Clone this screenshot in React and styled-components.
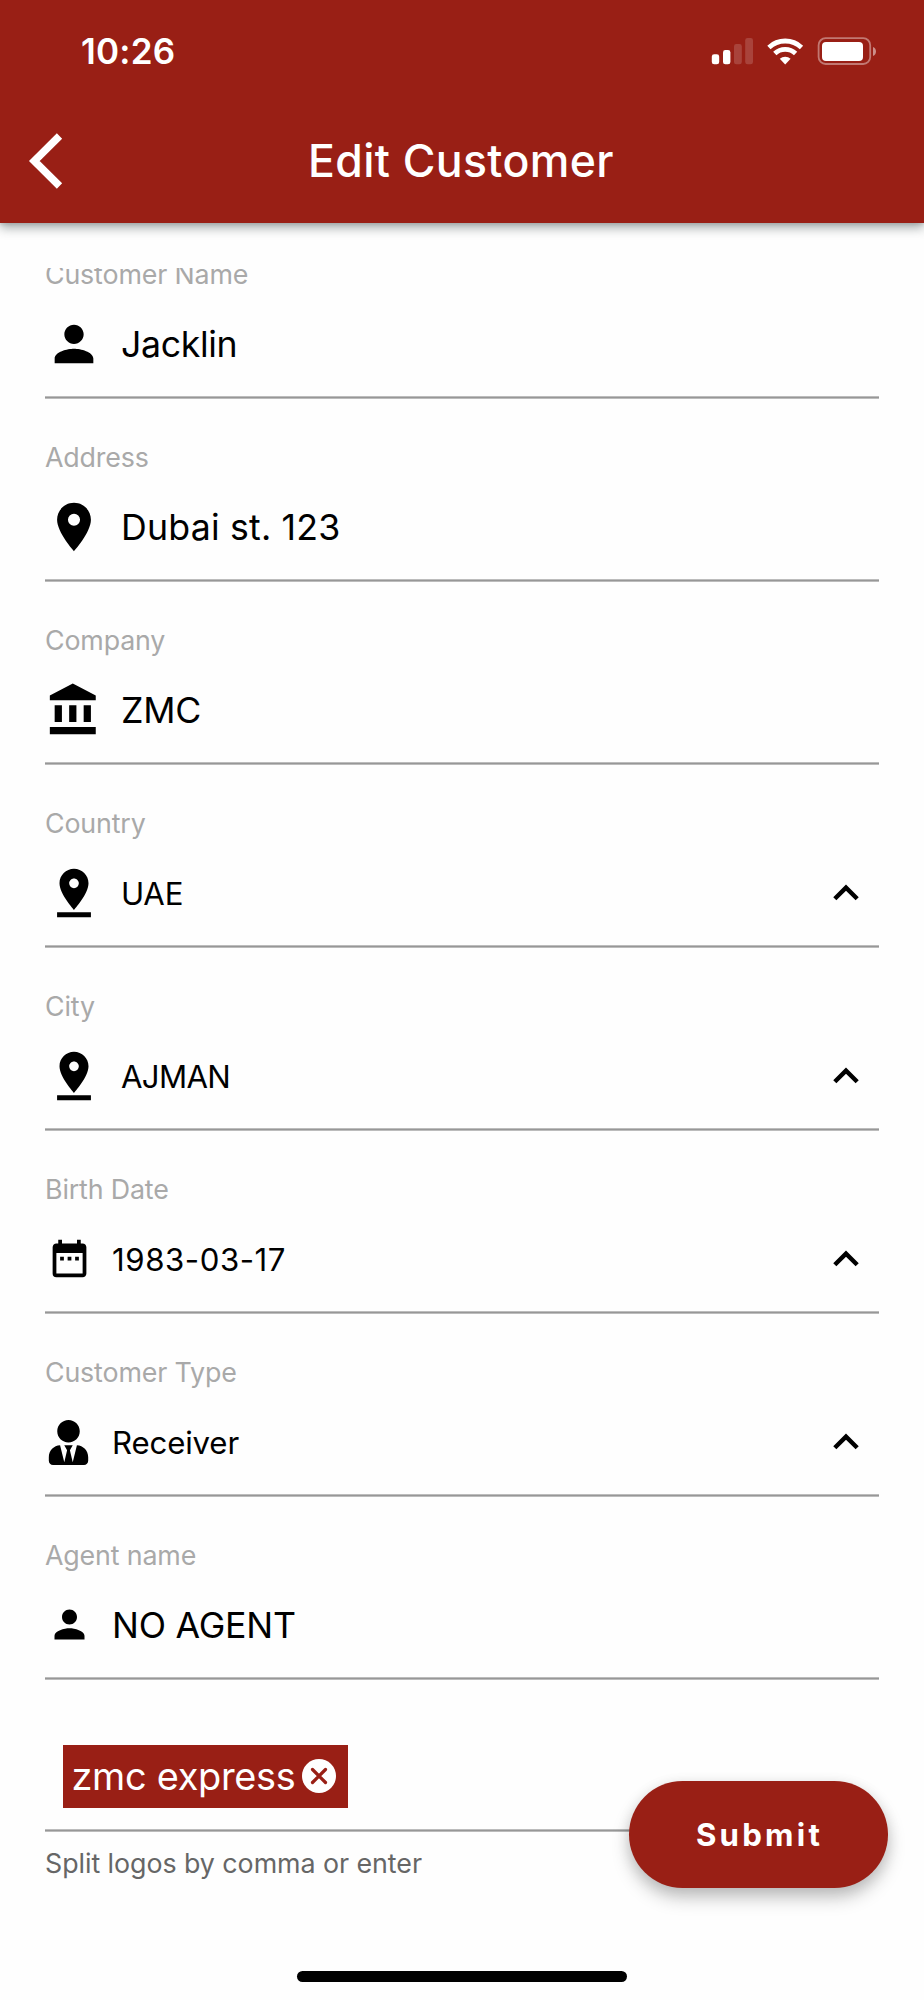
import React from "react";
import styled, { createGlobalStyle } from "styled-components";
import { MdDateRange, MdLocationOn, MdPerson, MdPinDrop } from "react-icons/md";
import { FaUserTie } from "react-icons/fa";

const brand = "#991f15";

const GlobalStyle = createGlobalStyle`
  * {
    box-sizing: border-box;
  }
  body {
    margin: 0;
    background: #fefefe;
    font-family: Inter, "Liberation Sans", sans-serif;
  }
`;

const Screen = styled.div`
  position: relative;
  display: flex;
  flex-direction: column;
  width: 924px;
  height: 2000px;
  overflow: hidden;
  background: #fefefe;
`;

const Header = styled.header`
  flex: none;
  height: 223px;
  color: #fff;
  background: ${brand};
  box-shadow: 0 5px 10px rgba(40, 56, 54, 0.4), 0 2px 3px rgba(40, 56, 54, 0.12);
`;

const StatusBar = styled.div`
  display: flex;
  align-items: center;
  justify-content: space-between;
  height: 101px;
  padding: 0 48px 0 81px;
`;

const Time = styled.span`
  font-size: 35px;
  font-weight: 600;
  line-height: 40px;
  letter-spacing: 0.2px;
`;

const NavBar = styled.div`
  display: grid;
  grid-template-columns: 80px 1fr 82px;
  align-items: center;
  height: 120px;
`;

const BackButton = styled.button`
  display: flex;
  padding: 0 0 0 28px;
  border: 0;
  background: none;
`;

const Title = styled.h1`
  margin: 0;
  text-align: center;
  font-size: 44.6px;
  font-weight: 500;
  line-height: 54px;
  letter-spacing: 0.38px;
`;

const Form = styled.main`
  flex: 1;
  margin-top: 45px;
  padding: 0 45px;
  overflow: hidden;
`;

// the list is scrolled a little, the first label slides under the top edge
const Fields = styled.div`
  margin-top: -52px;
`;

const Label = styled.label`
  display: block;
  padding-top: 42px;
  height: 74px;
  font-size: 26.8px;
  line-height: 32px;
  letter-spacing: -0.15px;
  color: #a9a9a9;
`;

const Row = styled.div`
  display: flex;
  align-items: center;
  height: 106px;
  padding-top: 1px;
`;

const IconBox = styled.span`
  display: flex;
  flex: none;
  justify-content: center;
  width: ${(props) => (props.$wide ? "58px" : "48px")};
  margin-right: ${(props) => (props.$wide ? "18px" : "19px")};
`;

const Value = styled.span`
  flex: 1;
  padding-top: ${(props) => (props.$small ? "2px" : "0")};
  font-size: ${(props) => (props.$small ? "31.2px" : "35.7px")};
  line-height: 44px;
  letter-spacing: ${(props) => props.$spacing}px;
  color: #000;
`;

const Divider = styled.div`
  height: 3px;
  border: solid #bcbcbc;
  border-width: 1px 0;
  background: #979797;
`;

const TagRow = styled.div`
  display: flex;
  height: 149px;
  padding: 65px 0 0 17.5px;
`;

const Tag = styled.span`
  display: flex;
  align-items: center;
  gap: 7px;
  width: 285.5px;
  height: 63px;
  padding: 0 0 1px 9px;
  font-size: 37.9px;
  letter-spacing: -0.3px;
  white-space: nowrap;
  color: #fff;
  background: ${brand};
`;

const Hint = styled.p`
  margin: 14px 0 0;
  font-size: 26.8px;
  line-height: 34px;
  letter-spacing: -0.05px;
  color: #666;
`;

// floats over the end of the form
const SubmitButton = styled.button`
  position: absolute;
  right: 36px;
  bottom: 112px;
  width: 259px;
  height: 107px;
  padding: 0 0 0 2px;
  border: 0;
  border-radius: 54px;
  font-family: inherit;
  font-size: 31.2px;
  font-weight: 700;
  letter-spacing: 3.2px;
  color: #fff;
  background: ${brand};
  box-shadow: 0 10px 18px rgba(0, 0, 0, 0.22), 0 3px 14px rgba(0, 0, 0, 0.1);
`;

const HomeIndicator = styled.div`
  flex: none;
  align-self: center;
  width: 330px;
  height: 11px;
  margin-bottom: 18px;
  border-radius: 6px;
  background: #000;
`;

const TieIcon = styled(FaUserTie)`
  margin: 2px 2px 0 0;
`;

const BankIcon = ({ size }) => (
  <svg width={size} height={size} viewBox="0 0 24 24">
    <path d="M4 10v7h3v-7H4zm6 0v7h3v-7h-3zM2 22h19v-3H2v3zm14-12v7h3v-7h-3zm-4.500-9L2 6v2h19V6l-9.500-5z" />
  </svg>
);

const fields = [
  { label: "Customer Name", value: "Jacklin", icon: MdPerson, wide: true, spacing: -0.35 },
  { label: "Address", value: "Dubai st. 123", icon: MdLocationOn, wide: true, spacing: 0.2 },
  { label: "Company", value: "ZMC", icon: BankIcon, wide: true },
  { label: "Country", value: "UAE", icon: MdPinDrop, wide: true, select: true },
  { label: "City", value: "AJMAN", icon: MdPinDrop, wide: true, select: true, spacing: -0.7 },
  { label: "Birth Date", value: "1983-03-17", icon: MdDateRange, select: true, spacing: 0.55 },
  { label: "Customer Type", value: "Receiver", icon: TieIcon, select: true, spacing: -0.15 },
  { label: "Agent name", value: "NO AGENT", icon: MdPerson },
];

const StatusIcons = () => (
  <svg width="166" height="30" viewBox="710 35 166 30" fill="#fff">
    <rect x="711.8" y="53.3" width="7.4" height="10" rx="2.4" />
    <rect x="723" y="49" width="7.4" height="14.3" rx="2.4" />
    <g opacity="0.16">
      <rect x="734" y="43" width="7.8" height="20.3" rx="2.4" />
      <rect x="745.2" y="37" width="7.8" height="26.3" rx="2.4" />
    </g>
    <g fill="none" stroke="#fff" strokeWidth="4.8">
      <path d="M768.9 46.400a24 24 0 0 1 32.600 0" />
      <path d="M774.8 52.500a15.300 15.300 0 0 1 20.800 0" />
    </g>
    <path d="M785.2 63.400l-5.400-5.600a8 8 0 0 1 10.800 0z" />
    <rect x="818.6" y="37.2" width="51.6" height="25.8" rx="7" fill="none" stroke="#fff" strokeWidth="1.8" opacity="0.4" />
    <rect x="822" y="41" width="41" height="19" rx="4" />
    <path d="M873 46c4 1.600 4 7.400 0 9z" opacity="0.5" />
  </svg>
);

const BackIcon = () => (
  <svg width="35" height="56" viewBox="0 0 35 56">
    <path d="M31.500 3L6.300 28l25.200 25" fill="none" stroke="#fff" strokeWidth="7.5" />
  </svg>
);

const Chevron = styled.svg`
  flex: none;
  width: 26px;
  height: 17px;
  margin-right: 20px;
`;

const ChevronUp = () => (
  <Chevron viewBox="0 0 26 17">
    <path d="M1.800 14.800L13 3.600l11.200 11.200" fill="none" stroke="#000" strokeWidth="4.4" />
  </Chevron>
);

const RemoveIcon = () => (
  <svg width="34" height="34" viewBox="0 0 34 34">
    <circle cx="17" cy="17" r="17" fill="#fff" />
    <path d="M10.500 10.500l13 13M23.500 10.500l-13 13" stroke={brand} strokeWidth="3.2" strokeLinecap="round" />
  </svg>
);

const Field = ({ label, value, icon: Icon, wide, select, spacing = -0.24 }) => (
  <div>
    <Label>{label}</Label>
    <Row>
      <IconBox $wide={wide}>
        <Icon size={wide ? 58 : 45} />
      </IconBox>
      <Value $small={select} $spacing={spacing}>
        {value}
      </Value>
      {select && <ChevronUp />}
    </Row>
    <Divider />
  </div>
);

export default function App() {
  return (
    <Screen>
      <GlobalStyle />
      <Header>
        <StatusBar>
          <Time>10:26</Time>
          <StatusIcons />
        </StatusBar>
        <NavBar>
          <BackButton aria-label="Back">
            <BackIcon />
          </BackButton>
          <Title>Edit Customer</Title>
        </NavBar>
      </Header>
      <Form>
        <Fields>
          {fields.map((field) => (
            <Field key={field.label} {...field} />
          ))}
        </Fields>
        <TagRow>
          <Tag>
            zmc express
            <RemoveIcon />
          </Tag>
        </TagRow>
        <Divider />
        <Hint>Split logos by comma or enter</Hint>
      </Form>
      <SubmitButton>Submit</SubmitButton>
      <HomeIndicator />
    </Screen>
  );
}
